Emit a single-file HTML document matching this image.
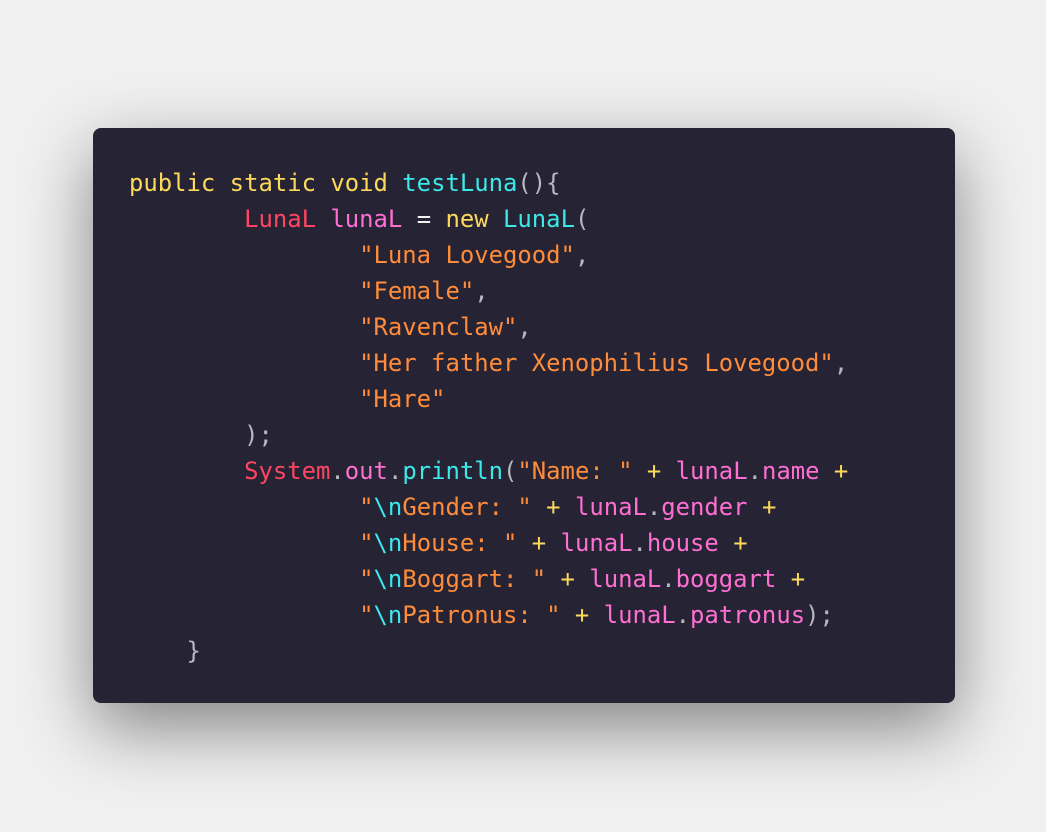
<!DOCTYPE html>
<html><head><style>
html,body{margin:0;padding:0;}
body{width:1046px;height:832px;background:#f0f0f0;position:relative;overflow:hidden;}
.card{position:absolute;left:93px;top:128px;width:862px;height:575px;background:#262335;border-radius:8px;box-shadow:0 25px 70px rgba(0,0,0,0.45);}
pre{position:absolute;left:36px;top:37px;margin:0;font-family:"DejaVu Sans Mono","Liberation Mono",monospace;font-size:23.9px;line-height:36px;color:#b8b8c0;letter-spacing:0;}
.y{color:#fcd95a}.c{color:#3ce8e8}.r{color:#ff4560}.p{color:#ff6fd2}.o{color:#ff8c3a}.w{color:#f0f0f0}
</style></head><body>
<div class="card"><pre><span class="y">public static void</span> <span class="c">testLuna</span>(){
        <span class="r">LunaL</span> <span class="p">lunaL</span> <span class="w">=</span> <span class="y">new</span> <span class="c">LunaL</span>(
                <span class="o">"Luna Lovegood"</span>,
                <span class="o">"Female"</span>,
                <span class="o">"Ravenclaw"</span>,
                <span class="o">"Her father Xenophilius Lovegood"</span>,
                <span class="o">"Hare"</span>
        );
        <span class="r">System</span>.<span class="p">out</span>.<span class="c">println</span>(<span class="o">"Name: "</span> <span class="y">+</span> <span class="p">lunaL</span>.<span class="p">name</span> <span class="y">+</span>
                <span class="o">"<span class="c">\n</span>Gender: "</span> <span class="y">+</span> <span class="p">lunaL</span>.<span class="p">gender</span> <span class="y">+</span>
                <span class="o">"<span class="c">\n</span>House: "</span> <span class="y">+</span> <span class="p">lunaL</span>.<span class="p">house</span> <span class="y">+</span>
                <span class="o">"<span class="c">\n</span>Boggart: "</span> <span class="y">+</span> <span class="p">lunaL</span>.<span class="p">boggart</span> <span class="y">+</span>
                <span class="o">"<span class="c">\n</span>Patronus: "</span> <span class="y">+</span> <span class="p">lunaL</span>.<span class="p">patronus</span>);
    }</pre></div>
</body></html>
